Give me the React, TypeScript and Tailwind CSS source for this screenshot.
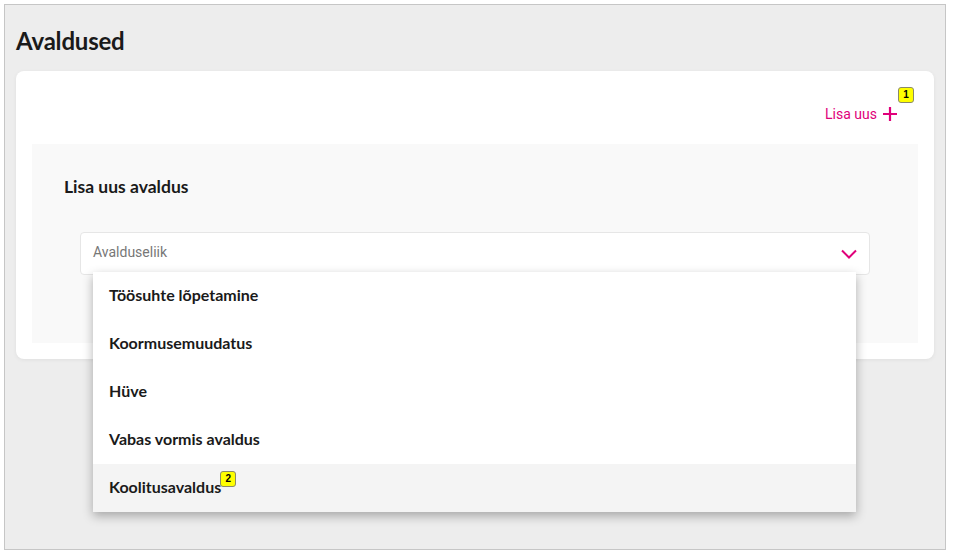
import React from 'react';

const Badge: React.FC<{ n: number; className?: string }> = ({ n, className = '' }) => (
  <span
    className={`inline-flex h-[16px] w-[16px] items-center justify-center rounded-[3px] border border-[#8a8a6a] bg-[#ffff00] text-[10px] font-bold leading-none text-black [font-family:'Liberation_Sans',Arial,sans-serif] ${className}`}
  >
    {n}
  </span>
);

const options = ['Töösuhte lõpetamine', 'Koormusemuudatus', 'Hüve', 'Vabas vormis avaldus', 'Koolitusavaldus'];

const App: React.FC = () => {
  return (
    <div className="h-[556px] w-[954px] bg-white p-[4px] [font-family:Lato,sans-serif]">
      <div className="h-[546px] w-[942px] border border-[#c6c6c6] bg-[#ededed] px-[11px] pt-[19px]">
        <h1 className="text-[24px] font-bold leading-[34px] tracking-[-0.2px] text-[#1a1a1a]">Avaldused</h1>

        {/* Card */}
        <div className="mt-[13px] rounded-[8px] bg-white px-[16px] pb-[16px] shadow-[0_1px_4px_rgba(0,0,0,0.06)]">
          <div className="flex h-[73px] items-center justify-end pr-[20px] pt-[13px]">
            <button className="relative flex items-center gap-[5px] text-[14px] text-[#e0007a] [font-family:Roboto,sans-serif]">
              Lisa uus
              <svg width="16" height="16" viewBox="0 0 16 16" fill="none" stroke="#e0007a" strokeWidth="2.2">
                <path d="M8 1v14M1 8h14" />
              </svg>
              <Badge n={1} className="absolute -right-[16px] -top-[17px]" />
            </button>
          </div>

          <div className="relative h-[199px] bg-[#f9f9f9] px-[32px] pt-[32px]">
            <h2 className="text-[17.5px] font-bold leading-[22px] text-[#1a1a1a]">Lisa uus avaldus</h2>

            <div className="mx-[16px] mt-[34px] flex h-[43px] items-center justify-between rounded-[4px] border border-[#e6e6e6] bg-white pl-[12px] pr-[12px]">
              <span className="mb-[3px] text-[14px] text-[#777] [font-family:Roboto,sans-serif]">Avalduseliik</span>
              <svg width="16" height="10" viewBox="0 0 16 10" fill="none" stroke="#e0007a" strokeWidth="2">
                <path d="M1 1.5l7 7 7-7" />
              </svg>
            </div>

            {/* Dropdown menu */}
            <ul className="absolute left-[61px] top-[128px] z-10 w-[763px] bg-white shadow-[0_4px_10px_rgba(0,0,0,0.3)]">
              {options.map((o, i) => (
                <li
                  key={o}
                  className={`flex h-[48px] items-center px-[16px] pb-[2px] text-[16px] font-bold text-[#1a1a1a] ${
                    i === options.length - 1 ? 'bg-[#f4f4f4]' : ''
                  }`}
                >
                  <span className="relative">
                    {o}
                    {i === options.length - 1 && <Badge n={2} className="absolute -right-[15px] -top-[4px]" />}
                  </span>
                </li>
              ))}
            </ul>
          </div>
        </div>
      </div>
    </div>
  );
};

export default App;
